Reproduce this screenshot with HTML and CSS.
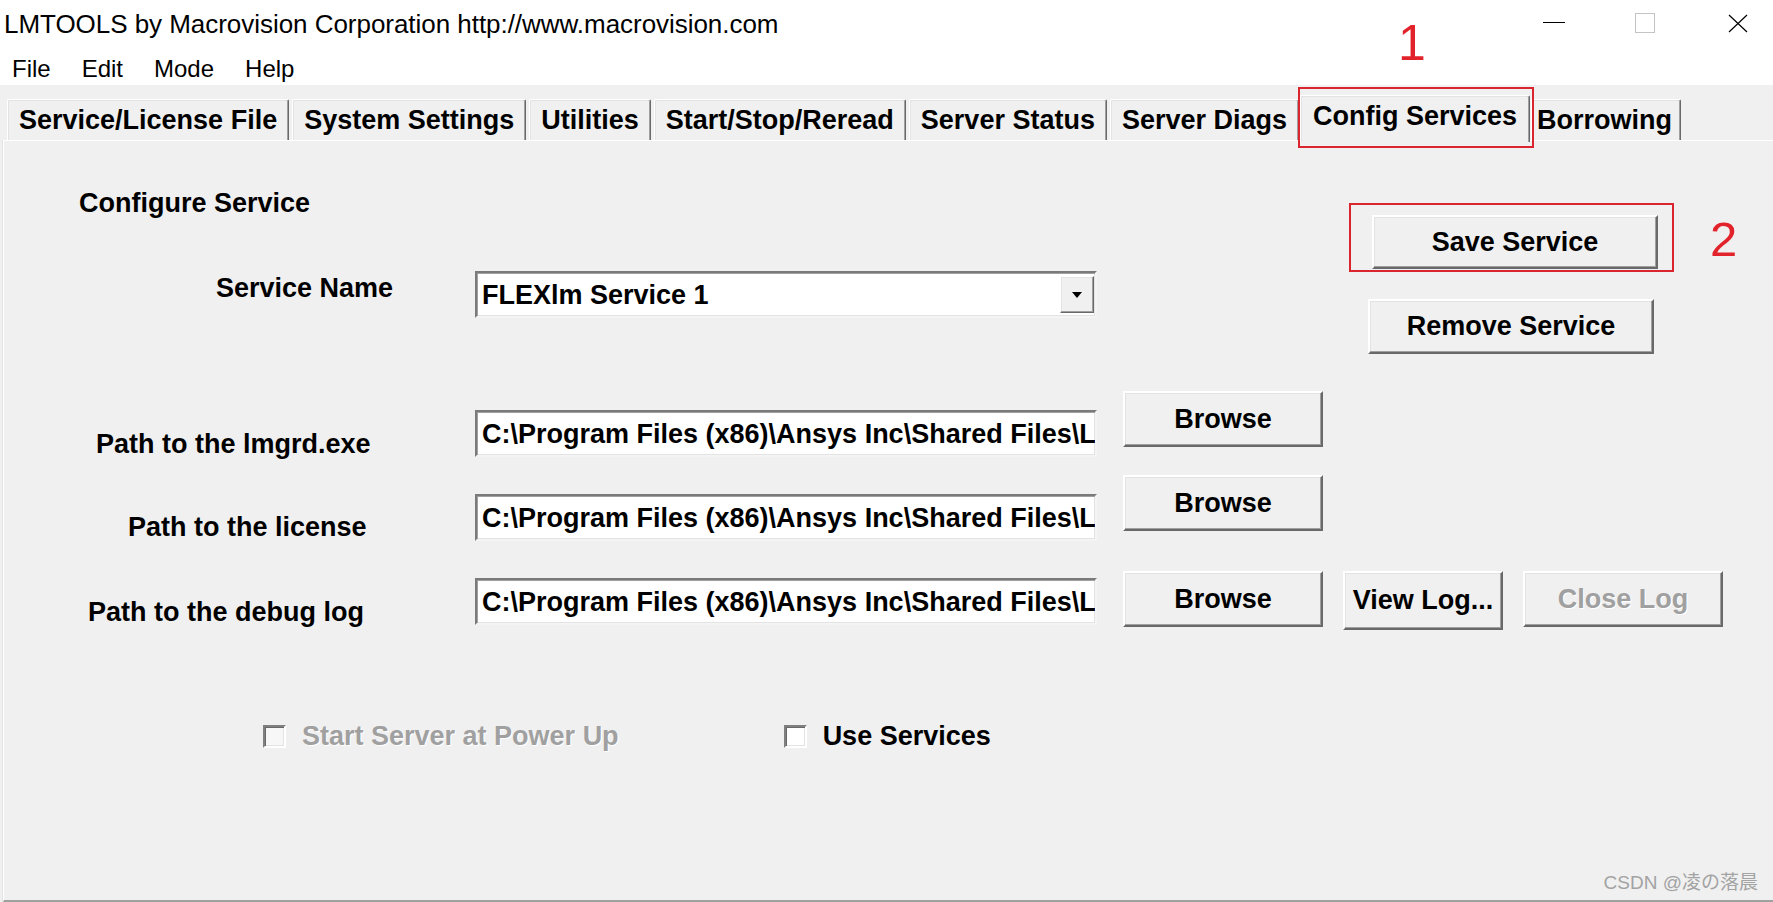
FILE: index.html
```html
<!DOCTYPE html>
<html lang="en">
<head>
<meta charset="utf-8">
<title>LMTOOLS</title>
<link rel="stylesheet" href="styles.css">
</head>
<body>
<div class="window">
  <header class="titlebar">
    <div class="title">LMTOOLS by Macrovision Corporation http://www.macrovision.com</div>
    <div class="winctrls">
      <svg class="wc wc-min" width="22" height="20" viewBox="0 0 22 20"><line x1="0" y1="9.5" x2="22" y2="9.5" stroke="#000" stroke-width="1"/></svg>
      <svg class="wc wc-max" width="20" height="20" viewBox="0 0 20 20"><rect x="0.5" y="0.5" width="19" height="19" fill="none" stroke="#c4c4c4" stroke-width="1"/></svg>
      <svg class="wc wc-close" width="20" height="20" viewBox="0 0 20 20"><path d="M1 2 L19 19 M19 2 L1 19" stroke="#000" stroke-width="1.2" fill="none"/></svg>
    </div>
  </header>
  <span class="anno anno-1">1</span>
  <nav class="menubar">
    <span class="menu-item">File</span>
    <span class="menu-item">Edit</span>
    <span class="menu-item">Mode</span>
    <span class="menu-item">Help</span>
  </nav>
  <div class="tabstrip">
    <div class="tab">Service/License File</div>
    <div class="tab">System Settings</div>
    <div class="tab">Utilities</div>
    <div class="tab">Start/Stop/Reread</div>
    <div class="tab">Server Status</div>
    <div class="tab">Server Diags</div>
    <div class="tab tab-active">Config Services</div>
    <div class="tab tab-last">Borrowing</div>
  </div>
  <section class="panel">
    <div class="top">
      <div class="top-left">
        <div class="heading">Configure Service</div>
        <div class="row-name">
          <div class="lbl lbl-name">Service Name</div>
          <div class="combo">
            <span class="combo-text">FLEXlm Service 1</span>
            <span class="combo-btn"><svg width="10" height="6" viewBox="0 0 10 6"><path d="M0 0 H10 L5 6 Z" fill="#000"/></svg></span>
          </div>
        </div>
      </div>
      <div class="top-right">
        <div class="save-row">
          <div class="btn btn-save">Save Service</div>
          <span class="anno anno-2">2</span>
        </div>
        <div class="btn btn-remove">Remove Service</div>
      </div>
    </div>

    <div class="prow prow-1">
      <div class="lbl lbl-lmgrd">Path to the lmgrd.exe</div>
      <div class="field field-1"><span class="field-text">C:\Program Files (x86)\Ansys Inc\Shared Files\L</span></div>
      <div class="btn btn-browse">Browse</div>
    </div>
    <div class="prow prow-2">
      <div class="lbl lbl-license">Path to the license</div>
      <div class="field field-2"><span class="field-text">C:\Program Files (x86)\Ansys Inc\Shared Files\L</span></div>
      <div class="btn btn-browse">Browse</div>
    </div>
    <div class="prow prow-3">
      <div class="lbl lbl-debug">Path to the debug log</div>
      <div class="field field-3"><span class="field-text">C:\Program Files (x86)\Ansys Inc\Shared Files\L</span></div>
      <div class="btn btn-browse">Browse</div>
      <div class="btn btn-view">View Log...</div>
      <div class="btn btn-close btn-disabled">Close Log</div>
    </div>

    <div class="checks">
      <span class="cb cb-disabled cb-1"></span>
      <span class="cb-label cb-label-disabled">Start Server at Power Up</span>
      <span class="cb cb-2"></span>
      <span class="cb-label">Use Services</span>
    </div>

    <div class="watermark">CSDN @凌の落晨</div>
  </section>
</div>
</body>
</html>
```

FILE: styles.css
```css
html, body {
  margin: 0;
  padding: 0;
}

body {
  background: #f0f0f0;
  font-family: "Liberation Sans", Arial, sans-serif;
  color: #000;
}

.window {
  position: relative;
  width: 1773px;
  height: 902px;
  overflow: hidden;
  display: flex;
  flex-direction: column;
}

/* ---------- title bar ---------- */
.titlebar {
  height: 46px;
  flex: none;
  background: #fff;
  display: flex;
  align-items: flex-start;
}

.title {
  font-size: 26px;
  line-height: 30px;
  padding: 9px 0 0 4px;
  white-space: nowrap;
  letter-spacing: -0.04px;
}

.winctrls {
  margin-left: auto;
  display: flex;
  align-items: flex-start;
  padding: 13px 25px 0 0;
}

.wc {
  display: block;
  flex: none;
}

.wc-min {
  margin-right: 70px;
}

.wc-max {
  margin-right: 73px;
}

/* ---------- annotations ---------- */
.anno {
  font-family: "Liberation Sans", Arial, sans-serif;
  color: #e3232b;
}

.anno-1 {
  position: absolute;
  left: 1398px;
  top: 18px;
  font-size: 50px;
  line-height: 50px;
}

.anno-2 {
  font-size: 49px;
  line-height: 49px;
  margin-left: 52px;
}

/* ---------- menu bar ---------- */
.menubar {
  height: 39px;
  flex: none;
  box-sizing: border-box;
  background: #fff;
  display: flex;
  gap: 31px;
  padding: 9px 0 0 12px;
  font-size: 24px;
  line-height: 28px;
}

/* ---------- tabs ---------- */
.tabstrip {
  height: 55px;
  flex: none;
  display: flex;
  align-items: flex-end;
  gap: 3px;
  padding-left: 7px;
  position: relative;
  z-index: 2;
}

.tab {
  height: 40px;
  line-height: 40px;
  padding: 0 11px;
  font-size: 27px;
  font-weight: bold;
  white-space: nowrap;
  background: #f0f0f0;
  border-top: 1px solid #fff;
  border-left: 1px solid #fff;
  border-right: 1px solid #696969;
  box-shadow: inset -1px 0 0 #a0a0a0, inset 1px 1px 0 #e3e3e3;
  border-top-left-radius: 2px;
  border-top-right-radius: 2px;
}

.tab-active {
  height: 46px;
  padding: 0 12px;
  margin: 0 -2px -2px;
  position: relative;
  z-index: 3;
}

.tab-active::after {
  content: "";
  position: absolute;
  left: -3px;
  right: -5px;
  top: -9px;
  bottom: -6px;
  border: 2px solid #d9262e;
}

.tab-last {
  padding: 0 8px 0 5px;
}

/* ---------- panel ---------- */
.panel {
  flex: 1;
  position: relative;
  margin-left: 3px;
  box-sizing: border-box;
  padding-top: 46px;
  border-top: 1px solid #fff;
  border-left: 1px solid #fff;
  border-bottom: 2px solid #a0a0a0;
  box-shadow: -1px 0 0 #e3e3e3;
}

.top {
  display: flex;
  align-items: flex-start;
}

.top-left {
  width: 1345px;
  flex: none;
}

.heading {
  margin-left: 75px;
  font-size: 27px;
  line-height: 32px;
  font-weight: bold;
}

.row-name {
  display: flex;
  align-items: flex-start;
  margin-top: 52px;
}

.lbl {
  flex: none;
  width: 471px;
  box-sizing: border-box;
  font-size: 27px;
  line-height: 32px;
  font-weight: bold;
  white-space: nowrap;
}

.lbl-name {
  padding-left: 212px;
  margin-top: 1px;
}

.lbl-lmgrd {
  padding-left: 92px;
  margin-top: 37px;
}

.lbl-license {
  padding-left: 124px;
  margin-top: 36px;
}

.lbl-debug {
  padding-left: 84px;
  margin-top: 25px;
}

.combo,
.field {
  flex: none;
  width: 622px;
  height: 47px;
  box-sizing: border-box;
  background: #fff;
  border: 2px solid;
  border-color: #7a7a7a #f4f4f4 #f4f4f4 #7a7a7a;
  box-shadow: inset 1px 1px 0 #a0a0a0, inset -1px -1px 0 #e3e3e3;
  display: flex;
  align-items: center;
  padding-left: 5px;
  overflow: hidden;
}

.combo-text {
  font-size: 27px;
  line-height: 32px;
  font-weight: bold;
  white-space: nowrap;
}

.field-text {
  display: block;
  font-size: 27px;
  line-height: 32px;
  font-weight: bold;
  white-space: nowrap;
}

.combo-btn {
  margin-left: auto;
  margin-right: 1px;
  width: 34px;
  height: 37px;
  box-sizing: border-box;
  background: #f0f0f0;
  border: 1px solid;
  border-color: #fff #696969 #696969 #fff;
  box-shadow: inset -1px -1px 0 #a0a0a0, inset 1px 1px 0 #e3e3e3;
  display: flex;
  align-items: center;
  justify-content: center;
  flex: none;
}

.combo-btn svg {
  display: block;
}

.top-right {
  flex: none;
}

.save-row {
  display: flex;
  align-items: flex-start;
  margin: 28px 0 0 23px;
}

/* ---------- buttons ---------- */
.btn {
  flex: none;
  box-sizing: border-box;
  display: flex;
  align-items: center;
  justify-content: center;
  font-size: 27px;
  font-weight: bold;
  white-space: nowrap;
  background: #f0f0f0;
  border: 2px solid;
  border-color: #fff #696969 #696969 #fff;
  box-shadow: inset -1px -1px 0 #a0a0a0, inset 1px 1px 0 #e3e3e3;
}

.btn-save {
  width: 286px;
  height: 54px;
  position: relative;
}

.btn-save::after {
  content: "";
  position: absolute;
  left: -25px;
  right: -18px;
  top: -14px;
  bottom: -5px;
  border: 2px solid #d9262e;
}

.btn-remove {
  width: 286px;
  height: 55px;
  margin: 30px 0 0 19px;
}

.prow {
  display: flex;
  align-items: flex-start;
}

.prow-1 {
  margin-top: 37px;
}

.prow-2 {
  margin-top: 15px;
}

.prow-3 {
  margin-top: 28px;
}

.field-1,
.field-2 {
  margin-top: 19px;
}

.field-3 {
  margin-top: 7px;
}

.btn-browse {
  width: 200px;
  height: 56px;
  margin-left: 26px;
}

.btn-view {
  width: 160px;
  height: 59px;
  margin-left: 20px;
}

.btn-close {
  width: 200px;
  height: 56px;
  margin-left: 20px;
}

.btn-disabled {
  color: #a0a0a0;
  text-shadow: 1px 1px 0 #fff;
}

/* ---------- checkboxes ---------- */
.checks {
  display: flex;
  align-items: center;
  margin-top: 90px;
}

.cb {
  flex: none;
  width: 23px;
  height: 23px;
  box-sizing: border-box;
  background: #fff;
  border: 2px solid;
  border-color: #808080 #fff #fff #808080;
  box-shadow: inset 1px 1px 0 #696969, inset -1px -1px 0 #e3e3e3;
}

.cb-disabled {
  background: #f7f7f7;
}

.cb-1 {
  margin-left: 259px;
}

.cb-2 {
  margin-left: 165px;
}

.cb-label {
  margin-left: 16px;
  font-size: 27px;
  line-height: 32px;
  font-weight: bold;
  white-space: nowrap;
}

.cb-label-disabled {
  color: #a0a0a0;
  text-shadow: 1px 1px 0 #fff;
}

/* ---------- watermark ---------- */
.watermark {
  position: absolute;
  right: 15px;
  bottom: 7px;
  font-family: "Liberation Sans", "Noto Sans CJK SC", sans-serif;
  font-size: 19px;
  line-height: 20px;
  color: #a3a3a3;
  white-space: nowrap;
}
```
